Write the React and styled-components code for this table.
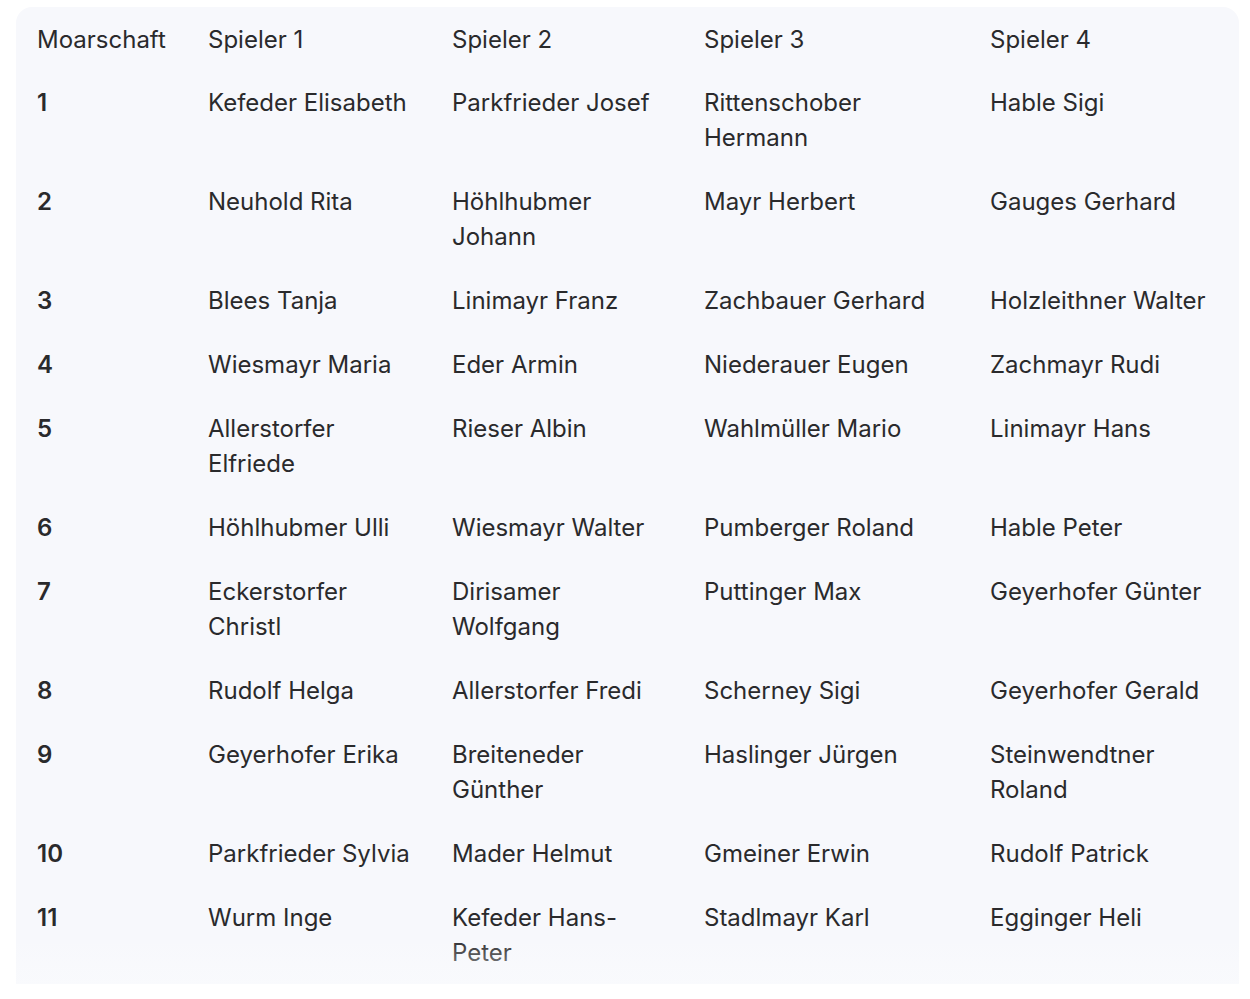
import React from "react";
import styled, { createGlobalStyle } from "styled-components";

const Global = createGlobalStyle`
  html, body { margin: 0; padding: 0; background: #ffffff; }
  body { font-family: Inter, "Noto Sans", sans-serif; }
`;

const Page = styled.div`
  padding: 7px 10px 16px 16px;
`;

const Card = styled.div`
  position: relative;
  width: 1223px;
  background: #f7f8fc;
  border-radius: 16px 16px 0 0;
  padding: 0 0 0 21px;
  box-sizing: border-box;
  overflow: hidden;
`;

const Grid = styled.div`
  display: grid;
  grid-template-columns: 171px 244px 252px 286px 249px;
  font-size: 24px;
  line-height: 35px;
  color: #2a2a2c;
`;

const padFor = [20, 36, 44, 46, 24];

const HeadCell = styled.div`
  padding: 15px ${(p) => padFor[p.$col]}px 13px 0;
  font-weight: 400;
`;

const Cell = styled.div`
  padding: 14.5px ${(p) => padFor[p.$col]}px 14.5px 0;
  font-weight: ${(p) => (p.$col === 0 ? 600 : 400)};
`;

const Fade = styled.div`
  position: absolute;
  left: 0;
  right: 0;
  bottom: 0;
  height: 46px;
  background: linear-gradient(to bottom, rgba(247, 248, 252, 0), rgba(250, 251, 253, 0.6));
  pointer-events: none;
`;

const headers = ["Moarschaft", "Spieler 1", "Spieler 2", "Spieler 3", "Spieler 4"];

const rows = [
  ["1", "Kefeder Elisabeth", "Parkfrieder Josef", "Rittenschober Hermann", "Hable Sigi"],
  ["2", "Neuhold Rita", "Höhlhubmer Johann", "Mayr Herbert", "Gauges Gerhard"],
  ["3", "Blees Tanja", "Linimayr Franz", "Zachbauer Gerhard", "Holzleithner Walter"],
  ["4", "Wiesmayr Maria", "Eder Armin", "Niederauer Eugen", "Zachmayr Rudi"],
  ["5", "Allerstorfer Elfriede", "Rieser Albin", "Wahlmüller Mario", "Linimayr Hans"],
  ["6", "Höhlhubmer Ulli", "Wiesmayr Walter", "Pumberger Roland", "Hable Peter"],
  ["7", "Eckerstorfer Christl", "Dirisamer Wolfgang", "Puttinger Max", "Geyerhofer Günter"],
  ["8", "Rudolf Helga", "Allerstorfer Fredi", "Scherney Sigi", "Geyerhofer Gerald"],
  ["9", "Geyerhofer Erika", "Breiteneder Günther", "Haslinger Jürgen", "Steinwendtner Roland"],
  ["10", "Parkfrieder Sylvia", "Mader Helmut", "Gmeiner Erwin", "Rudolf Patrick"],
  ["11", "Wurm Inge", "Kefeder Hans-Peter", "Stadlmayr Karl", "Egginger Heli"],
];

export default function App() {
  return (
    <>
      <Global />
      <Page>
        <Card>
          <Grid>
            {headers.map((h, i) => (
              <HeadCell key={h} $col={i}>
                {h}
              </HeadCell>
            ))}
            {rows.map((r) =>
              r.map((c, i) => (
                <Cell key={r[0] + "-" + i} $col={i}>
                  {c}
                </Cell>
              ))
            )}
          </Grid>
          <Fade />
        </Card>
      </Page>
    </>
  );
}
